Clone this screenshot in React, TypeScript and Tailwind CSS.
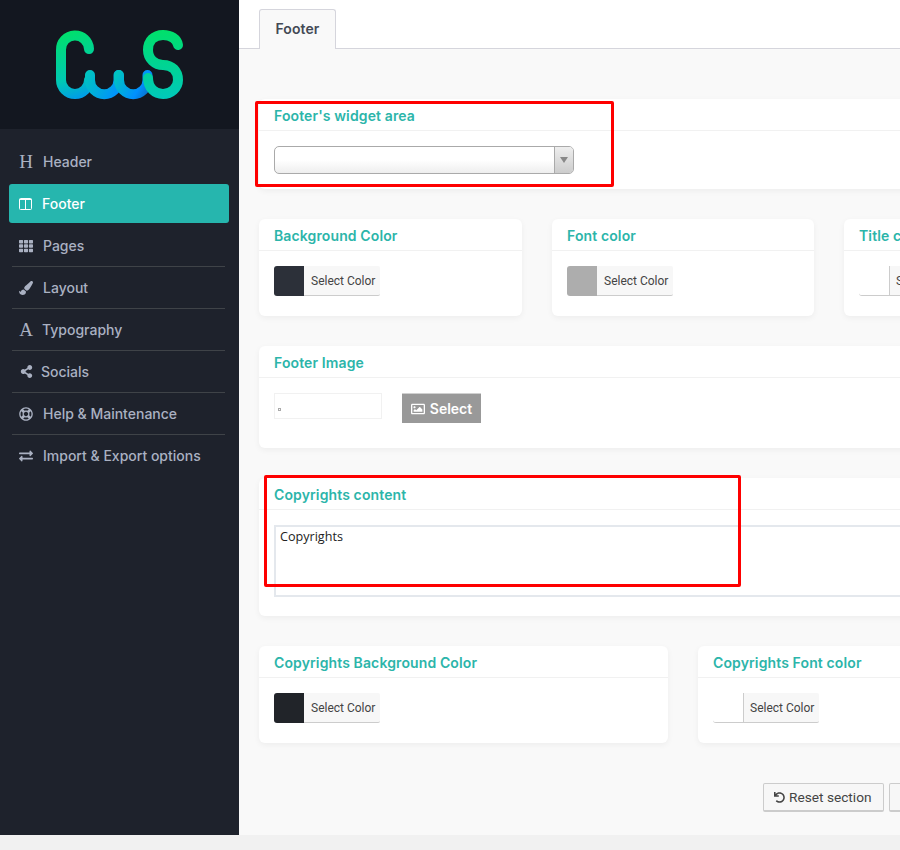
import type { ReactNode } from 'react';
import { FaTh, FaPaintBrush, FaShareAlt, FaRegLifeRing, FaExchangeAlt, FaRegImage, FaUndo } from 'react-icons/fa';

function Logo() {
    return (
        <svg width="160" height="90" viewBox="40 20 160 90" fill="none" strokeWidth="10" strokeLinecap="round">
            <defs>
                <linearGradient id="capC" gradientUnits="userSpaceOnUse" x1="70" y1="30" x2="90" y2="100">
                    <stop offset="0" stopColor="#00e06a" />
                    <stop offset="0.65" stopColor="#00c8b4" />
                    <stop offset="1" stopColor="#0092f5" />
                </linearGradient>
                <linearGradient id="wave1" gradientUnits="userSpaceOnUse" x1="88" y1="72" x2="120" y2="92">
                    <stop offset="0" stopColor="#00c4c0" />
                    <stop offset="1" stopColor="#0090ff" />
                </linearGradient>
                <linearGradient id="wave2" gradientUnits="userSpaceOnUse" x1="118" y1="72" x2="150" y2="92">
                    <stop offset="0" stopColor="#00c4c0" />
                    <stop offset="0.7" stopColor="#0090ff" />
                    <stop offset="1" stopColor="#0a70c8" />
                </linearGradient>
                <linearGradient id="capS" gradientUnits="userSpaceOnUse" x1="160" y1="30" x2="160" y2="100">
                    <stop offset="0" stopColor="#00e06a" />
                    <stop offset="1" stopColor="#00c8bc" />
                </linearGradient>
            </defs>
            <path d="M89 49 A14 14 0 0 0 61 50 V80 A14 14 0 0 0 89 80" stroke="url(#capC)" />
            <path d="M90 75 V80 A14 14 0 0 0 118.500 80 V75" stroke="url(#wave1)" />
            <path d="M119 75 V80 A14 14 0 0 0 147.500 80 V75" stroke="url(#wave2)" />
            <path d="M178 45 C177 39 171 35 163 35 C154 35 148 41 148 50 C148 59 155 65 163 65 C172 65 178 71 178 80 C178 88 171 94 163 94 C155 94 148 88 148 78" stroke="url(#capS)" />
        </svg>
    );
}

function ColumnsIcon() {
    return (
        <svg width="13" height="12" viewBox="0 0 13 12" fill="none" stroke="currentColor" strokeWidth="1">
            <rect x="0.500" y="0.500" width="12" height="11" rx="1" />
            <path d="M6.500 0.500 V11.500 M0.500 1.500 H12.500" />
        </svg>
    );
}

const serifIcon = "font-['Liberation_Serif',serif] text-[19px] leading-none";

const navItems: { label: string; icon: ReactNode; gap: string }[] = [
    { label: 'Header', icon: <span className={serifIcon}>H</span>, gap: 'gap-[10px]' },
    { label: 'Pages', icon: <FaTh size={14} />, gap: 'gap-[10px]' },
    { label: 'Layout', icon: <FaPaintBrush size={14} />, gap: 'gap-[10px]' },
    { label: 'Typography', icon: <span className={serifIcon}>A</span>, gap: 'gap-[9px]' },
    { label: 'Socials', icon: <FaShareAlt size={13} />, gap: 'gap-[8px]' },
    { label: 'Help & Maintenance', icon: <FaRegLifeRing size={14} />, gap: 'gap-[10px]' },
    { label: 'Import & Export options', icon: <FaExchangeAlt size={14} />, gap: 'gap-[10px]' },
];

function NavRow({ label, icon, gap, divider }: { label: string; icon: ReactNode; gap: string; divider?: boolean }) {
    return (
        <div className={`mx-3 h-[42px] flex items-center pl-[7px] w-[213px] border-b ${gap} ${divider ? 'border-[#3f4348]' : 'border-transparent'}`}>
            <span className="w-[14px] flex justify-center shrink-0">{icon}</span>
            <span>{label}</span>
        </div>
    );
}

function Sidebar() {
    return (
        <aside className="w-[239px] shrink-0 bg-[#1e222c] text-[#aab1c2] text-[14px] font-medium">
            <div className="h-[129px] pt-[1px] bg-[#131720] flex items-center justify-center">
                <Logo />
            </div>
            <div className="pt-[12px]">
                <NavRow {...navItems[0]} />
                <div className="mx-[9px] h-[39px] mt-[1px] mb-[2px] bg-[#26b6ae] rounded-[3px] flex items-center gap-[10px] pl-[10px] w-[220px] text-white">
                    <ColumnsIcon />
                    <span>Footer</span>
                </div>
                {navItems.slice(1).map((item, i) => (
                    <NavRow key={item.label} {...item} divider={i < navItems.length - 2} />
                ))}
            </div>
        </aside>
    );
}

function Card({ title, className, children }: { title: string; className: string; children: ReactNode }) {
    return (
        <div className={`bg-white rounded-[6px] shadow-[0_2px_6px_rgba(0,0,0,0.05)] shrink-0 ${className}`}>
            <div className="h-[32px] pt-[2px] border-b border-[#f1f1f1] pl-[15px] flex items-center text-[14px] tracking-[0.12px] font-semibold text-[#2cb5aa]">
                {title}
            </div>
            <div className="pl-[15px] pt-[15px]">{children}</div>
        </div>
    );
}

function ColorPicker({ swatch, divider }: { swatch: string; divider?: boolean }) {
    return (
        <div className="flex w-[106px] h-[30px] text-[12px] font-['Roboto',sans-serif] text-[#444]">
            <div className={`w-[30px] rounded-l-[3px] ${swatch}`} />
            <div className={`flex-1 bg-[#f7f7f7] border-b border-[#ccc] rounded-r-[2px] flex items-center ${divider ? 'border-l pl-[6px]' : 'pl-[7px]'}`}>
                Select Color
            </div>
        </div>
    );
}

function ToolbarButton({ children, className }: { children: ReactNode; className: string }) {
    return (
        <div className={`h-[29px] shrink-0 flex items-center gap-[4px] pl-[10px] bg-[#f7f7f7] border border-[#ccc] border-b-2 rounded-[2px] text-[13.7px] text-[#444] font-['Roboto',sans-serif] ${className}`}>
            {children}
        </div>
    );
}

function App() {
    return (
        <div className="relative w-[900px] h-[850px] overflow-hidden bg-[#f1f1f1] font-['Inter',sans-serif]">
            <div className="flex h-[835px]">
                <Sidebar />
                <main className="flex-1 min-w-0 overflow-hidden bg-[#f9f9f9]">
                    <div className="h-[49px] bg-white border-b border-[#d5d5dc] pl-[20px] flex items-end">
                        <div className="w-[77px] h-[40px] -mb-px pb-[2px] bg-[#f9f9f9] border border-b-0 border-[#d5d5dc] rounded-t-[3px] flex items-center justify-center text-[14px] tracking-[0.1px] font-semibold text-[#444a55]">
                            Footer
                        </div>
                    </div>

                    <div className="pl-[20px] pt-[50px] flex flex-col gap-[30px] w-[1000px]">
                        <Card title="Footer's widget area" className="h-[90px] w-[980px]">
                            <div className="w-[300px] h-[28px] flex border border-[#aaa] rounded-[5px] bg-linear-to-b from-white from-50% to-[#eeeeee] overflow-hidden">
                                <div className="flex-1" />
                                <div className="w-[19px] border-l border-[#aaa] bg-linear-to-b from-[#eeeeee] to-[#cccccc] flex items-center justify-center">
                                    <div className="w-0 h-0 border-x-[4px] border-x-transparent border-t-[6px] border-t-[#888]" />
                                </div>
                            </div>
                        </Card>

                        <div className="flex gap-[30px]">
                            <Card title="Background Color" className="h-[97px] w-[263px]">
                                <ColorPicker swatch="bg-[#2c3039]" />
                            </Card>
                            <Card title="Font color" className="h-[97px] w-[262px]">
                                <ColorPicker swatch="bg-[#adadad]" />
                            </Card>
                            <Card title="Title color" className="h-[97px] w-[262px]">
                                <ColorPicker swatch="bg-white border-b border-[#ccc]" divider />
                            </Card>
                        </div>

                        <Card title="Footer Image" className="h-[102px] w-[980px]">
                            <div className="flex gap-[20px]">
                                <div className="relative w-[108px] h-[26px] border border-[#f1f1f1]">
                                    <div className="absolute left-[3px] top-[14px] w-[3px] h-[3px] border border-[#aaa]" />
                                </div>
                                <div className="w-[79px] h-[30px] bg-[#999999] border-t border-[#d0d0d0] flex items-center justify-center gap-[5px] text-white text-[14px] font-semibold">
                                    <FaRegImage size={14} />
                                    <span>Select</span>
                                </div>
                            </div>
                        </Card>

                        <Card title="Copyrights content" className="h-[138px] w-[980px]">
                            <div className="w-[900px] h-[72px] border-2 border-[#e4e8ed] pl-[4px] pt-[1px] text-[12.600px] leading-[17px] text-[#222] font-['Open_Sans',sans-serif]">
                                Copyrights
                            </div>
                        </Card>

                        <div className="flex gap-[30px]">
                            <Card title="Copyrights Background Color" className="h-[97px] w-[409px]">
                                <ColorPicker swatch="bg-[#212429]" />
                            </Card>
                            <Card title="Copyrights Font color" className="h-[97px] w-[409px]">
                                <ColorPicker swatch="bg-white border-b border-[#ccc]" divider />
                            </Card>
                        </div>

                        <div className="flex gap-[5px] mt-[10px] pl-[504px]">
                            <ToolbarButton className="w-[121px]">
                                <FaUndo size={11} />
                                <span>Reset section</span>
                            </ToolbarButton>
                            <ToolbarButton className="w-[100px]">
                                <FaUndo size={11} />
                                <span>Reset all</span>
                            </ToolbarButton>
                        </div>
                    </div>
                </main>
            </div>

            {/* hand-drawn red annotations on top of the screenshot */}
            <div className="absolute left-[255px] top-[101px] w-[359px] h-[86px] border-[3px] border-[#fe0000] rounded-[2px]" />
            <div className="absolute left-[264px] top-[475px] w-[477px] h-[112px] border-[3px] border-[#fe0000] rounded-[2px]" />
        </div>
    );
}

export default App;
